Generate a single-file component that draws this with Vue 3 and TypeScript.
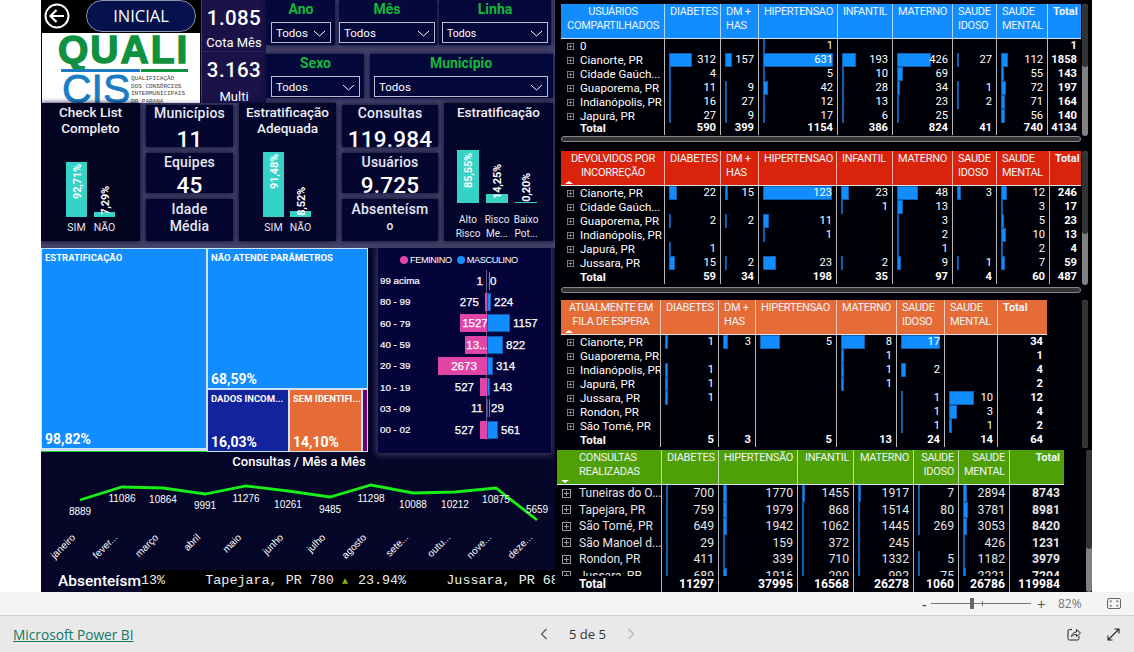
<script setup lang="ts">
type Val = number | null
interface Tbl {
  cls: string
  first: string[]
  firstAlign: string
  cols: number[]
  heads: { t: string[]; a?: string }[]
  scale: number[]
  rows: { n: string; v: Val[] }[]
  total: Val[]
  vthumb: number
  hscroll: boolean
}

const tables: Tbl[] = [
  {
    cls: 't1', first: ['USUÁRIOS', 'COMPARTILHADOS'], firstAlign: 'center',
    cols: [103, 56, 38, 79, 55, 60, 44, 51, 34],
    heads: [{ t: ['DIABETES'] }, { t: ['DM +', 'HAS'] }, { t: ['HIPERTENSAO'] }, { t: ['INFANTIL'] }, { t: ['MATERNO'] }, { t: ['SAUDE', 'IDOSO'] }, { t: ['SAUDE', 'MENTAL'] }, { t: ['Total'], a: 'b' }],
    scale: [0.074, 0.045, 0.111, 0.073, 0.08, 0.06, 0.0625, 0],
    rows: [
      { n: '0', v: [null, null, 1, null, null, null, null, 1] },
      { n: 'Cianorte, PR', v: [312, 157, 631, 193, 426, 27, 112, 1858] },
      { n: 'Cidade Gaúch...', v: [4, null, 5, 10, 69, null, 55, 143] },
      { n: 'Guaporema, PR', v: [11, 9, 42, 28, 34, 1, 72, 197] },
      { n: 'Indianópolis, PR', v: [16, 27, 12, 13, 23, 2, 71, 164] },
      { n: 'Japurá, PR', v: [27, 9, 17, 6, 25, null, 56, 140] }
    ],
    total: [590, 399, 1154, 386, 824, 41, 740, 4134], vthumb: 48, hscroll: true
  },
  {
    cls: 't2', first: ['DEVOLVIDOS POR', 'INCORREÇÃO'], firstAlign: 'center',
    cols: [103, 56, 38, 78, 56, 60, 44, 53, 32],
    heads: [{ t: ['DIABETES'] }, { t: ['DM +', 'HAS'] }, { t: ['HIPERTENSAO'] }, { t: ['INFANTIL'] }, { t: ['MATERNO'] }, { t: ['SAUDE', 'IDOSO'] }, { t: ['SAUDE', 'MENTAL'] }, { t: ['Total'], a: 'b' }],
    scale: [0.37, 0.2, 0.56, 0.35, 0.44, 1.2, 0.5, 0],
    rows: [
      { n: 'Cianorte, PR', v: [22, 15, 123, 23, 48, 3, 12, 246] },
      { n: 'Cidade Gaúch...', v: [null, null, null, 1, 13, null, 3, 17] },
      { n: 'Guaporema, PR', v: [2, 2, 11, null, 3, null, 5, 23] },
      { n: 'Indianópolis, PR', v: [null, null, 1, null, 2, null, 10, 13] },
      { n: 'Japurá, PR', v: [1, null, null, null, 1, null, 2, 4] },
      { n: 'Jussara, PR', v: [15, 2, 23, 2, 9, 1, 7, 59] }
    ],
    total: [59, 34, 198, 35, 97, 4, 60, 487], vthumb: 62, hscroll: true
  },
  {
    cls: 't3', first: ['ATUALMENTE EM', 'FILA DE ESPERA'], firstAlign: 'center',
    cols: [99, 58, 37, 81, 60, 48, 53, 50],
    heads: [{ t: ['DIABETES'] }, { t: ['DM +', 'HAS'] }, { t: ['HIPERTENSAO'] }, { t: ['MATERNO'] }, { t: ['SAUDE', 'IDOSO'] }, { t: ['SAUDE', 'MENTAL'] }, { t: ['Total'], a: 'b' }],
    scale: [3, 1.7, 4, 3, 2.3, 2.5, 0],
    rows: [
      { n: 'Cianorte, PR', v: [1, 3, 5, 8, 17, null, 34] },
      { n: 'Guaporema, PR', v: [null, null, null, 1, null, null, 1] },
      { n: 'Indianópolis, PR', v: [1, null, null, 1, 2, null, 4] },
      { n: 'Japurá, PR', v: [1, null, null, 1, null, null, 2] },
      { n: 'Jussara, PR', v: [1, null, null, null, 1, 10, 12] },
      { n: 'Rondon, PR', v: [null, null, null, null, 1, 3, 4] },
      { n: 'São Tomé, PR', v: [null, null, null, null, 1, 1, 2] }
    ],
    total: [5, 3, 5, 13, 24, 14, 64], vthumb: 115, hscroll: false
  },
  {
    cls: 't4', first: ['CONSULTAS', 'REALIZADAS'], firstAlign: 'left',
    cols: [104, 57, 79, 56, 60, 45, 51, 55],
    heads: [{ t: ['DIABETES'], a: 'r' }, { t: ['HIPERTENSÃO'], a: 'r' }, { t: ['INFANTIL'], a: 'r' }, { t: ['MATERNO'], a: 'r' }, { t: ['SAUDE', 'IDOSO'], a: 'r' }, { t: ['SAUDE', 'MENTAL'], a: 'r' }, { t: ['Total'], a: 'rb' }],
    scale: [0.003, 0.002, 0.0018, 0.0016, 0.003, 0.0014, 0],
    rows: [
      { n: 'Tuneiras do O...', v: [700, 1770, 1455, 1917, 7, 2894, 8743] },
      { n: 'Tapejara, PR', v: [759, 1979, 868, 1514, 80, 3781, 8981] },
      { n: 'São Tomé, PR', v: [649, 1942, 1062, 1445, 269, 3053, 8420] },
      { n: 'São Manoel d...', v: [29, 159, 372, 245, null, 426, 1231] },
      { n: 'Rondon, PR', v: [411, 339, 710, 1332, 5, 1182, 3979] },
      { n: 'Jussara, PR', v: [689, 1916, 290, 992, 75, 2221, 7204] }
    ],
    total: [11297, 37995, 16568, 26278, 1060, 26786, 119984], vthumb: 70, hscroll: false
  }
]

const gridCols = (t: Tbl) => t.cols.map((c) => c + 'px').join(' ')
const barW = (t: Tbl, i: number, v: Val) => (v === null || !t.scale[i] ? 0 : Math.max(1, Math.round(v * t.scale[i])))

const panels = [
  { title: ['Check List', 'Completo'], cls: 'p-check', names: [['SIM'], ['NÃO']], bars: [{ h: 55, l: '92,71%', b: 18 }, { h: 5, l: '7,29%', b: 2 }] },
  { title: ['Estratificação', 'Adequada'], cls: 'p-adeq', names: [['SIM'], ['NÃO']], bars: [{ h: 65, l: '91,48%', b: 28 }, { h: 6, l: '8,52%', b: 1 }] },
  { title: ['Estratificação'], cls: 'p-estr', names: [['Alto', 'Risco'], ['Risco', 'Me...'], ['Baixo', 'Pot...']], bars: [{ h: 53, l: '85,55%', b: 15 }, { h: 9, l: '14,25%', b: 4 }, { h: 1, l: '0,20%', b: 1 }] }
]

const kpiA = [
  { t: 'Municípios', v: '11' },
  { t: 'Equipes', v: '45' },
  { t: 'Idade', t2: 'Média' }
]
const kpiB = [
  { t: 'Consultas', v: '119.984' },
  { t: 'Usuários', v: '9.725' },
  { t: 'Absenteísm', t2: 'o', small: true }
]

const pyramid = [
  { a: '99 acima', f: 1, m: 0 },
  { a: '80 - 99', f: 275, m: 224 },
  { a: '60 - 79', f: 1527, m: 1157 },
  { a: '40 - 59', f: 1300, m: 822, fl: '13...' },
  { a: '20 - 39', f: 2673, m: 314 },
  { a: '10 - 19', f: 527, m: 143 },
  { a: '03 - 09', f: 11, m: 29 },
  { a: '00 - 02', f: 527, m: 561 }
]
const pw = (v: number) => (v === 0 ? 0 : Math.max(1, Math.round(v * 0.0195)))

const linePts: [number, number, number, number, string][] = [
  [80, 500, 8889, 515, 'janeiro'],
  [122, 487, 11086, 502, 'fever...'],
  [163, 488, 10864, 503, 'março'],
  [205, 494, 9991, 509, 'abril'],
  [246, 486, 11276, 502, 'maio'],
  [288, 491, 10261, 508, 'junho'],
  [330, 497, 9485, 513, 'julho'],
  [371, 485, 11298, 502, 'agosto'],
  [413, 493, 10088, 508, 'sete...'],
  [455, 492, 10212, 508, 'outu...'],
  [496, 488, 10875, 503, 'nove...'],
  [537, 520, 5659, 513, 'deze...']
]
const poly = linePts.map((p) => p[0] + ',' + p[1]).join(' ')
const tickerA = '13%     Tapejara, PR 780 '
const tickerB = ' 23.94%     Jussara, PR 689'
</script>

<template>
  <div class="page">
    <div class="canvas">
      <div class="left">
        <div class="top">
          <div class="brand">
            <div class="nav">
              <svg class="back" width="26" height="26" viewBox="0 0 26 26" aria-hidden="true">
                <circle cx="13" cy="13" r="11.5" fill="none" stroke="#fff" stroke-width="2" />
                <path d="M20 13H7M12.5 7L6.5 13l6 6" fill="none" stroke="#fff" stroke-width="2.2" />
              </svg>
              <div class="pill">INICIAL</div>
            </div>
            <div class="logo">
              <div class="quali">QUALI</div>
              <div class="rule"><i></i><b></b></div>
              <div class="cisrow">
                <span class="cis">CIS</span>
                <span class="fine">QUALIFICAÇÃO<br />DOS CONSÓRCIOS<br />INTERMUNICIPAIS<br />DO PARANÁ</span>
              </div>
            </div>
          </div>
          <div class="quota">
            <div class="q"><b>1.085</b><span>Cota Mês</span></div>
            <div class="q second"><b>3.163</b><span>Multi</span></div>
          </div>
          <div class="slicers">
            <div class="s-row a">
              <div class="slicer ano"><h4>Ano</h4><div class="dd">Todos<svg width="13" height="7" viewBox="0 0 13 7"><path d="M1 1l5.5 5L12 1" fill="none" stroke="#fff" /></svg></div></div>
              <div class="slicer mes"><h4>Mês</h4><div class="dd">Todos<svg width="13" height="7" viewBox="0 0 13 7"><path d="M1 1l5.5 5L12 1" fill="none" stroke="#fff" /></svg></div></div>
              <div class="slicer lin"><h4>Linha</h4><div class="dd sm">Todos<svg width="13" height="7" viewBox="0 0 13 7"><path d="M1 1l5.5 5L12 1" fill="none" stroke="#fff" /></svg></div></div>
            </div>
            <div class="s-row b">
              <div class="slicer sex"><h4>Sexo</h4><div class="dd">Todos<svg width="13" height="7" viewBox="0 0 13 7"><path d="M1 1l5.5 5L12 1" fill="none" stroke="#fff" /></svg></div></div>
              <div class="slicer mun"><h4>Município</h4><div class="dd">Todos<svg width="13" height="7" viewBox="0 0 13 7"><path d="M1 1l5.5 5L12 1" fill="none" stroke="#fff" /></svg></div></div>
            </div>
          </div>
        </div>

        <div class="row2">
          <template v-for="(slot, si) in ['p0', 'k0', 'p1', 'k1', 'p2']" :key="slot">
            <div v-if="slot[0] === 'p'" class="panel" :class="panels[+slot[1]].cls">
              <div class="ptitle"><div v-for="l in panels[+slot[1]].title" :key="l">{{ l }}</div></div>
              <div class="chart">
                <div v-for="b in panels[+slot[1]].bars" :key="b.l" class="bar-col" :style="{ height: b.h + 'px' }">
                  <span class="vlabel" :style="{ bottom: b.b + 'px' }">{{ b.l }}</span>
                </div>
              </div>
              <div class="names">
                <div v-for="(n, i) in panels[+slot[1]].names" :key="i" class="name"><div v-for="w in n" :key="w">{{ w }}</div></div>
              </div>
            </div>
            <div v-else class="kstack" :class="si === 3 ? 'kb' : 'ka'">
              <div v-for="k in (si === 3 ? kpiB : kpiA)" :key="k.t" class="kpi">
                <div class="ktitle">{{ k.t }}</div>
                <div v-if="k.t2" class="ktitle" :class="{ ksmall: (k as any).small }">{{ k.t2 }}</div>
                <div v-if="k.v" class="kval">{{ k.v }}</div>
              </div>
            </div>
          </template>
        </div>

        <div class="lower">
          <div class="row3">
            <div class="treemap">
              <div class="tm blue main">
                <span class="tm-h">ESTRATIFICAÇÃO</span><span class="tm-v">98,82%</span>
              </div>
              <div class="tm-right">
                <div class="tm blue top-r"><span class="tm-h">NÃO ATENDE PARÂMETROS</span><span class="tm-v">68,59%</span></div>
                <div class="tm-bottom">
                  <div class="tm navy"><span class="tm-h">DADOS INCOM...</span><span class="tm-v">16,03%</span></div>
                  <div class="tm orange"><span class="tm-h">SEM IDENTIFI...</span><span class="tm-v">14,10%</span></div>
                  <div class="tm purple"></div>
                </div>
              </div>
            </div>
            <div class="pyr">
              <div class="legend">
                <i class="dot f"></i><span>FEMININO</span><i class="dot m"></i><span>MASCULINO</span>
              </div>
              <div class="pyr-body">
                <div class="axis"></div>
                <div v-for="r in pyramid" :key="r.a" class="pyr-row">
                  <span class="age">{{ r.a }}</span>
                  <div class="side l">
                    <template v-if="pw(r.f) > 24">
                      <div class="pb fem" :style="{ width: pw(r.f) + 'px' }">{{ r.fl || r.f }}</div>
                    </template>
                    <template v-else>
                      <span class="pv">{{ r.f }}</span>
                      <div class="pb fem" :style="{ width: pw(r.f) + 'px' }"></div>
                    </template>
                  </div>
                  <div class="side r">
                    <div class="pb mas" :style="{ width: pw(r.m) + 'px' }"></div>
                    <span class="pv">{{ r.m }}</span>
                  </div>
                </div>
              </div>
            </div>
          </div>

          <svg class="line" width="514" height="118" viewBox="41 452 514 118">
            <text x="299" y="466" class="l-title" text-anchor="middle">Consultas / Mês a Mês</text>
            <polyline :points="poly" fill="none" stroke="#18ee18" stroke-width="2.8" />
            <template v-for="p in linePts" :key="p[4]">
              <text :x="p[0]" :y="p[3]" class="l-val" text-anchor="middle">{{ p[2] }}</text>
              <text :transform="`translate(${p[0] - 4} 538) rotate(-45)`" class="l-mon" text-anchor="end">{{ p[4] }}</text>
            </template>
          </svg>

          <div class="ticker-row">
            <span class="abs">Absenteísm</span>
            <div class="ticker"><span>{{ tickerA }}</span><em>▲</em><span>{{ tickerB }}</span></div>
          </div>
        </div>
      </div>

      <div class="right">
        <div v-for="t in tables" :key="t.cls" class="block" :class="t.cls">
          <div class="tb" :style="{ width: t.cols.reduce((a, b) => a + b, 0) + 'px' }">
            <div class="grid head" :style="{ gridTemplateColumns: gridCols(t) }">
              <div class="hc first" :style="{ textAlign: t.firstAlign as any }">
                <div v-for="l in t.first" :key="l">{{ l }}</div>
                <i v-if="t.cls !== 't1'" class="sort"></i>
              </div>
              <div v-for="h in t.heads" :key="h.t[0]" class="hc" :class="h.a">
                <div v-for="l in h.t" :key="l">{{ l }}</div>
              </div>
            </div>
            <div class="body">
              <div v-for="r in t.rows" :key="r.n" class="grid row" :style="{ gridTemplateColumns: gridCols(t) }">
                <div class="nm">
                  <svg class="plus" viewBox="0 0 9 9" aria-hidden="true"><rect x=".5" y=".5" width="8" height="8" fill="none" stroke="#9a9a9a" /><path d="M2 4.5h5M4.5 2v5" stroke="#9a9a9a" /></svg>
                  <span>{{ r.n }}</span>
                </div>
                <div v-for="(v, i) in r.v" :key="i" class="c" :class="{ bold: i === r.v.length - 1 }">
                  <i v-if="barW(t, i, v)" class="tbar" :style="{ width: barW(t, i, v) + 'px' }"></i>
                  <span>{{ v }}</span>
                </div>
              </div>
            </div>
            <div class="grid row total" :style="{ gridTemplateColumns: gridCols(t) }">
              <div class="nm"><span>Total</span></div>
              <div v-for="(v, i) in t.total" :key="i" class="c"><span>{{ v }}</span></div>
            </div>
          </div>
          <div v-if="t.hscroll" class="hscroll"></div>
          <div class="vscroll"><i :style="{ height: t.vthumb + '%' }"></i></div>
        </div>
      </div>
    </div>

    <div class="zoombar">
      <span class="z-minus">-</span>
      <div class="slider"><i class="thumb"></i><i class="tick"></i></div>
      <span class="z-plus">+</span>
      <span class="z-pct">82%</span>
      <svg class="fit" width="14" height="11" viewBox="0 0 14 11"><rect x=".5" y=".5" width="13" height="10" rx="1.5" fill="none" stroke="#666" /><path d="M3 4V3h2M9 3h2v1M3 7v1h2M9 8h2V7" fill="none" stroke="#666" /></svg>
    </div>
    <div class="footer">
      <a class="pbi">Microsoft Power BI</a>
      <div class="pager">
        <svg width="8" height="12" viewBox="0 0 8 12"><path d="M6.5 1L1.5 6l5 5" fill="none" stroke="#555" stroke-width="1.2" /></svg>
        <span>5 de 5</span>
        <svg width="8" height="12" viewBox="0 0 8 12"><path d="M1.5 1l5 5-5 5" fill="none" stroke="#b5b5b5" stroke-width="1.2" /></svg>
      </div>
      <div class="tools">
        <svg width="14" height="14" viewBox="0 0 14 14"><path d="M5 2.5H2.5a1.5 1.5 0 0 0-1.5 1.5v7.5A1.5 1.5 0 0 0 2.5 13h8a1.5 1.5 0 0 0 1.5-1.5V9" fill="none" stroke="#222" /><path d="M4.5 9.5C5 6.5 7 5 9.5 5V2.5L13.5 6 9.500 9.500V7.500C7.500 7.500 6 8 4.500 9.500Z" fill="none" stroke="#222" /></svg>
        <svg width="13" height="13" viewBox="0 0 13 13"><path d="M1 12L12 1M7.500 1H12v4.500M1 7.500V12h4.500" fill="none" stroke="#222" stroke-width="1.1" /></svg>
      </div>
    </div>
  </div>
</template>

<style scoped>
.page {
  width: 1134px;
  height: 652px;
  background: #fff;
  display: flex;
  flex-direction: column;
  overflow: hidden;
  font-family: "Open Sans", "Liberation Sans", sans-serif;
  color: #fff;
}
.canvas {
  height: 592px;
  display: flex;
  padding-left: 41px;
  flex: none;
}
.left {
  width: 514px;
  height: 592px;
  display: flex;
  flex-direction: column;
  background: #45436b;
  flex: none;
  overflow: hidden;
}
.top {
  display: flex;
  height: 103px;
  flex: none;
}
.brand {
  width: 160px;
  flex: none;
  background: #02021a;
}
.nav {
  height: 33px;
  display: flex;
  align-items: flex-start;
  background: #000;
}
.back {
  margin: 3px 0 0 3px;
}
.pill {
  margin: 0 0 0 16px;
  width: 110px;
  height: 32px;
  box-sizing: border-box;
  border: 1px solid #8a90ad;
  border-radius: 16px;
  background: #06124e;
  text-align: center;
  font-size: 16.500px;
  line-height: 30px;
}
.logo {
  width: 158px;
  height: 70px;
  margin-left: 1px;
  background: #fff;
  overflow: hidden;
  box-sizing: border-box;
  padding: 0 0 0 16px;
}
.quali {
  font-family: "Liberation Sans", sans-serif;
  font-weight: 700;
  font-size: 39px;
  line-height: 34px;
  letter-spacing: 2px;
  color: #0f9140;
  -webkit-text-stroke: 1.4px #0f9140;
  height: 36px;
  white-space: nowrap;
}
.rule {
  display: flex;
  height: 3px;
  margin-left: 3px;
  width: 127px;
  gap: 1px;
}
.rule i {
  width: 79px;
  background: #1a7dc4;
}
.rule b {
  width: 47px;
  background: #0f9140;
}
.cisrow {
  display: flex;
  align-items: flex-start;
  margin-left: 4px;
}
.cis {
  font-family: "Liberation Sans", sans-serif;
  font-size: 41px;
  line-height: 35px;
  letter-spacing: 0;
  color: #1a7dc4;
  -webkit-text-stroke: .8px #1a7dc4;
  width: 69px;
  flex: none;
}
.fine {
  font-family: "Liberation Mono", monospace;
  font-size: 6px;
  line-height: 7.500px;
  color: #444;
  margin: 3px 0 0 0;
  white-space: nowrap;
}
.quota {
  width: 64px;
  margin-left: 1px;
  background: #1b1348;
  flex: none;
  text-align: center;
}
.q {
  height: 52px;
  box-sizing: border-box;
  border-bottom: 1px solid #2c2560;
  display: flex;
  flex-direction: column;
  padding-top: 5px;
}
.q.second {
  border: 0;
  padding-top: 5px;
}
.q b {
  font-family: Roboto, sans-serif;
  font-weight: 500;
  font-size: 20.500px;
  line-height: 27px;
  letter-spacing: .4px;
}
.q span {
  font-family: Roboto, sans-serif;
  font-size: 13px;
  line-height: 17px;
  margin-top: 2px;
}
.q.second span {
  margin-top: 4px;
}
.slicers {
  flex: 1;
  min-width: 0;
}
.s-row {
  display: flex;
}
.s-row.a {
  height: 45px;
  margin-bottom: 9px;
}
.s-row.b {
  height: 44px;
}
.slicer {
  background: #05083a;
  box-shadow: 0 0 5px #05083a;
  flex: none;
  box-sizing: border-box;
  position: relative;
}
.slicer h4 {
  margin: 0;
  color: #14b83c;
  font-family: Roboto, sans-serif;
  font-weight: 700;
  font-size: 14px;
  line-height: 18px;
  text-align: center;
  height: 22px;
}
.ano { width: 69px; padding-left: 5px; padding-right: 4px; }
.mes { width: 98px; margin-left: 4px; padding-left: 0; padding-right: 2px; }
.lin { width: 112px; margin-left: 2px; padding-left: 3px; padding-right: 3px; }
.sex { width: 98px; padding-left: 5px; padding-right: 4px; }
.mun { width: 183px; margin-left: 6px; padding-left: 4px; padding-right: 5px; }
.dd {
  height: 21px;
  box-sizing: border-box;
  border: 1px solid #b9bdcc;
  display: flex;
  align-items: center;
  justify-content: space-between;
  padding: 1px 4px 0;
  font-family: Roboto, sans-serif;
  font-size: 11.500px;
}
.dd.sm {
  font-size: 10.500px;
}
.row2 {
  display: flex;
  gap: 6px;
  height: 145px;
  flex: none;
  font-family: Roboto, sans-serif;
}
.panel {
  height: 138px;
  background: #03052a;
  box-shadow: 0 0 5px #03052a;
  box-sizing: border-box;
  display: flex;
  flex-direction: column;
  flex: none;
  text-align: center;
  padding-top: 1px;
}
.p-check { width: 99px; background: #02031f; }
.p-adeq { width: 97px; }
.p-estr { width: 109px; }
.ptitle {
  font-size: 13.500px;
  font-weight: 500;
  line-height: 16px;
  height: 36px;
  flex: none;
  color: #f0f0f5;
}
.chart {
  display: flex;
  align-items: flex-end;
  gap: 7px;
  flex: 1;
}
.p-check .chart, .p-check .names { padding-left: 25px; }
.p-adeq .chart, .p-adeq .names { padding-left: 24px; gap: 6px; }
.p-estr .chart, .p-estr .names { padding-left: 13px; }
.bar-col {
  width: 21px;
  background: #34d2c7;
  position: relative;
  flex: none;
}
.p-estr .bar-col {
  width: 22px;
}
.vlabel {
  position: absolute;
  left: 50%;
  writing-mode: vertical-rl;
  transform: translateX(-50%) rotate(180deg);
  font-size: 11px;
  font-weight: 700;
  letter-spacing: -.2px;
  white-space: nowrap;
}
.names {
  display: flex;
  gap: 7px;
  height: 20px;
  flex: none;
  padding-top: 4px;
  font-size: 10.500px;
  line-height: 14px;
}
.p-estr .names {
  height: 38px;
  box-sizing: border-box;
  padding-top: 10px;
  font-size: 10px;
}
.name {
  width: 21px;
  flex: none;
  display: flex;
  flex-direction: column;
  align-items: center;
  white-space: nowrap;
  color: #e8e8f0;
}
.p-estr .name {
  width: 22px;
}
.kstack {
  flex: none;
  display: flex;
  flex-direction: column;
  gap: 6px;
  height: 136px;
  margin-top: 2px;
}
.ka { width: 87px; }
.kb { width: 96px; }
.kpi {
  background: #04062f;
  box-shadow: 0 0 5px #04062f;
  overflow: hidden;
  text-align: center;
  height: 40px;
  box-sizing: border-box;
  padding-top: 1px;
}
.kpi:first-child { height: 42px; padding-top: 0; }
.kpi:last-child { height: 42px; padding-top: 2px; }
.ktitle {
  font-size: 14px;
  font-weight: 500;
  line-height: 17px;
  letter-spacing: .2px;
  color: #e6e8f5;
}
.ksmall {
  font-size: 12px;
}
.kval {
  font-size: 22.500px;
  font-weight: 500;
  line-height: 28px;
  margin-top: 3px;
  letter-spacing: .2px;
}
.kpi:nth-child(2) .kval {
  margin-top: 0;
}
.lower {
  flex: 1;
  background: #050628;
  display: flex;
  flex-direction: column;
  min-height: 0;
}
.row3 {
  display: flex;
  height: 204px;
  flex: none;
}
.treemap {
  width: 327px;
  display: flex;
  flex: none;
  font-family: Roboto, sans-serif;
}
.tm {
  box-sizing: border-box;
  position: relative;
  display: flex;
  flex-direction: column;
  justify-content: space-between;
  overflow: hidden;
  padding: 3px 3px 0;
  border: 1px solid #cfe3f7;
}
.tm-h {
  font-size: 9.500px;
  font-weight: 700;
  white-space: nowrap;
  line-height: 12px;
}
.tm-v {
  font-size: 14px;
  font-weight: 700;
  line-height: 17px;
}
.blue { background: #118dff; }
.navy { background: #12239e; }
.orange { background: #e66c37; }
.purple { background: #6b007b; }
.main {
  width: 166px;
  height: 203px;
  border-bottom: 3px solid #cfe3f7;
  box-shadow: 0 1px 0 #12d32c;
  flex: none;
}
.tm-right {
  width: 161px;
  display: flex;
  flex-direction: column;
  flex: none;
}
.top-r { height: 141px; flex: none; }
.tm-bottom {
  display: flex;
  height: 63px;
  flex: none;
}
.tm-bottom .navy { width: 82px; flex: none; }
.tm-bottom .orange { width: 73px; flex: none; }
.tm-bottom .purple { width: 6px; flex: none; padding: 0; }
.pyr {
  width: 173px;
  height: 205px;
  margin-left: 10px;
  background: #04043a;
  box-shadow: 0 0 6px 2px #3c3a60;
  flex: none;
  box-sizing: border-box;
  font-family: "Liberation Sans", sans-serif;
}
.legend {
  display: flex;
  align-items: center;
  height: 21px;
  padding-left: 22px;
  font-size: 9.200px;
  letter-spacing: -.4px;
  padding-top: 1px;
}
.legend span {
  margin-right: 5px;
  margin-left: 2px;
}
.dot {
  width: 8px;
  height: 8px;
  border-radius: 50%;
}
.dot.f { background: #e044a7; }
.dot.m { background: #118dff; }
.pyr-body {
  position: relative;
}
.axis {
  position: absolute;
  left: 108px;
  top: 0;
  bottom: 2px;
  width: 1px;
  background: #6a5a88;
}
.pyr-row {
  display: grid;
  grid-template-columns: 46px 63px 64px;
  height: 21.300px;
  align-items: center;
  position: relative;
}
.age {
  font-size: 9.800px;
  padding-left: 2px;
  white-space: nowrap;
  -webkit-text-stroke: .2px #fff;
}
.side {
  display: flex;
  align-items: center;
  gap: 3px;
  font-size: 11.500px;
  font-weight: 400;
  -webkit-text-stroke: .25px #fff;
}
.side.l {
  justify-content: flex-end;
}
.pb {
  height: 18px;
  flex: none;
  text-align: center;
  line-height: 18px;
  box-sizing: border-box;
}
.side.l .pb { margin-right: -3px; }
.pb.fem {
  background: #e044a7;
}
.pb.mas {
  background: #118dff;
  box-shadow: inset 0 0 0 1px #0d5aa8;
}
.side.l .pv { margin-right: 3px; }
.pv { white-space: nowrap; }
.line {
  display: block;
  flex: none;
  font-family: "Liberation Sans", sans-serif;
}
.l-title {
  fill: #fff;
  font-family: Roboto, sans-serif;
  font-weight: 500;
  font-size: 13px;
}
.l-val {
  fill: #fff;
  font-size: 10px;
}
.l-mon {
  fill: #fff;
  font-size: 10px;
}
.ticker-row {
  height: 22px;
  display: flex;
  flex: none;
  align-items: center;
  overflow: hidden;
}
.abs {
  width: 100px;
  padding-left: 17px;
  box-sizing: border-box;
  flex: none;
  font-family: Roboto, sans-serif;
  font-weight: 500;
  font-size: 15.500px;
  white-space: nowrap;
}
.ticker {
  flex: 1;
  background: #000;
  height: 22px;
  line-height: 22px;
  font-family: "Liberation Mono", monospace;
  font-size: 13.400px;
  white-space: pre;
  overflow: hidden;
  color: #eee;
}
.ticker em {
  font-style: normal;
  color: #8db600;
  font-size: 10px;
  display: inline-block;
  width: 8px;
}
.right {
  width: 537px;
  height: 592px;
  background: #000009;
  flex: none;
  font-size: 11px;
  font-family: Roboto, sans-serif;
}
.block {
  position: relative;
  padding-left: 6px;
  box-sizing: border-box;
}
.block.t1 { height: 151px; padding-top: 4px; }
.block.t2 { height: 149px; }
.block.t3 { height: 150px; }
.block.t4 { height: 142px; padding-left: 2px; }
.grid {
  display: grid;
}
.head {
  height: 35px;
  box-sizing: border-box;
  border-bottom: 1px solid #d8e4ee;
  line-height: 14px;
}
.t1 .head { background: #118dff; }
.t2 .head { background: #d9230b; }
.t3 .head { background: #e66c37; }
.t4 .head { background: #4f9f06; }
.hc {
  padding: 1px 4px 0 5px;
  border-left: 1px solid rgba(255, 255, 255, .65);
  position: relative;
  font-size: 11px;
  letter-spacing: -.3px;
  color: #eef4fb;
  white-space: nowrap;
}
.hc.b { font-weight: 700; letter-spacing: 0; }
.hc.rb { font-weight: 700; text-align: right; letter-spacing: 0; }
.hc.r { text-align: right; }
.hc.first {
  border-left: 0;
}
.t4 .hc.first { padding-left: 22px; }
.sort {
  position: absolute;
  left: 4px;
  bottom: 1px;
  border-left: 4px solid transparent;
  border-right: 4px solid transparent;
  border-bottom: 3px solid #fff;
}
.t4 .sort {
  border-bottom: 0;
  border-top: 3px solid #fff;
}
.row {
  height: 14px;
  line-height: 14px;
}
.t1 .total { margin-top: -2px; height: 13px; position: relative; }
.t4 .body { height: 91px; overflow: hidden; }
.t4 .row { height: 16.500px; line-height: 16.500px; color: #e6e6e6; }
.t4 .total { height: 16px; line-height: 16px; color: #fff; }
.nm {
  display: flex;
  align-items: center;
  white-space: nowrap;
  padding-left: 6px;
  gap: 6px;
  overflow: hidden;
  font-size: 11.500px;
}
.t4 .nm { font-size: 12px; padding-left: 5px; gap: 8px; }
.plus {
  width: 7px;
  height: 7px;
  flex: none;
}
.t4 .plus {
  width: 9px;
  height: 9px;
}
.total .nm {
  padding-left: 19px;
  font-weight: 700;
}
.t4 .total .nm { padding-left: 22px; }
.c {
  position: relative;
  text-align: right;
  padding-right: 4px;
  border-left: 1px solid #b8b8b8;
  font-size: 11.200px;
}
.t4 .c { font-size: 12.200px; }
.c span { position: relative; }
.c.bold, .total .c {
  font-weight: 700;
}
.tbar {
  position: absolute;
  left: 4px;
  top: 0;
  bottom: 0;
  box-sizing: border-box;
  background: #118dff;
  border: 1px solid #0d5fb0;
}
.hscroll {
  position: absolute;
  left: 6px;
  width: 520px;
  height: 6px;
  box-sizing: border-box;
  border-radius: 3px;
  background: #333;
  border: 1px solid #888;
}
.t1 .hscroll, .t2 .hscroll { top: 136px; }
.vscroll {
  position: absolute;
  left: 527px;
  width: 6px;
  top: 0;
  height: 133px;
  background: #808080;
  border-radius: 3px;
  overflow: hidden;
}
.t1 .vscroll { top: 4px; height: 132px; }
.t2 .vscroll { height: 134px; }
.t3 .vscroll { height: 148px; }
.t4 .vscroll { left: 531px; height: 142px; }
.vscroll i {
  display: block;
  background: #333;
  border-radius: 3px;
}
.zoombar {
  height: 23px;
  flex: none;
  background: #f4f4f4;
  border-bottom: 1px solid #cfcfcf;
  display: flex;
  align-items: center;
  position: relative;
  color: #555;
  font-family: "Open Sans", sans-serif;
}
.z-minus {
  margin-left: 922px;
  width: 9px;
  font-size: 14px;
  font-weight: 600;
}
.slider {
  width: 100px;
  height: 1px;
  background: #777;
  position: relative;
}
.thumb {
  position: absolute;
  left: 39px;
  top: -5px;
  width: 4px;
  height: 11px;
  background: #666;
}
.tick {
  position: absolute;
  left: 51px;
  top: -2px;
  width: 1px;
  height: 5px;
  background: #777;
}
.z-plus {
  margin-left: 6px;
  font-size: 15px;
  width: 11px;
}
.z-pct {
  margin-left: 10px;
  font-size: 12px;
  color: #777;
}
.fit {
  margin-left: 25px;
}
.footer {
  flex: 1;
  background: #e9e9e9;
  position: relative;
  display: flex;
  align-items: center;
  padding-left: 13px;
  color: #333;
  font-family: "Open Sans", sans-serif;
}
.pbi {
  color: #117865;
  font-size: 13.700px;
  text-decoration: underline;
  width: 527px;
  flex: none;
}
.pager {
  display: flex;
  align-items: center;
  gap: 21px;
  font-size: 13px;
  font-weight: 500;
  width: 430px;
}
.tools {
  margin-left: 97px;
  display: flex;
  align-items: center;
  gap: 26px;
}
</style>

<style>
html, body {
  margin: 0;
  overflow: hidden;
  background: #fff;
}
</style>
